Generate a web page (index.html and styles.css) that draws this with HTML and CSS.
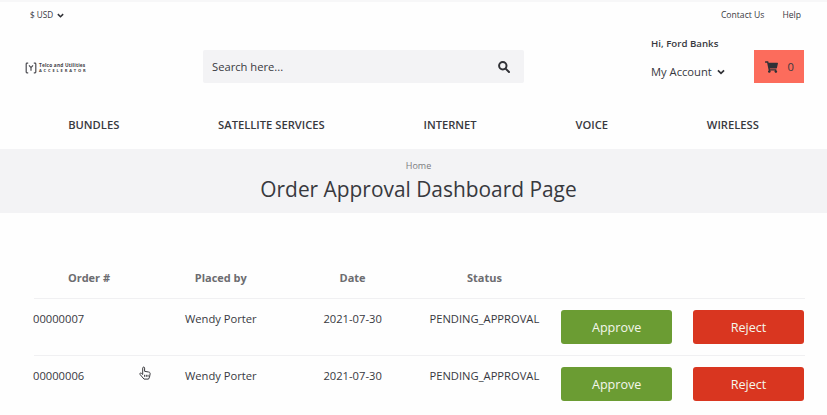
FILE: index.html
```html
<!DOCTYPE html>
<html lang="en">
<head>
<meta charset="utf-8">
<title>Order Approval Dashboard Page</title>
<link rel="stylesheet" href="styles.css">
</head>
<body>
<header>
  <div class="topbar">
    <div class="currency"><span>$ USD</span><svg class="chev" viewBox="0 0 10 7"><path d="M1.2 1.5 5 5.2 8.8 1.5"/></svg></div>
    <nav class="links"><a>Contact Us</a><a>Help</a></nav>
  </div>
  <div class="main">
    <div class="logo">
      <svg viewBox="0 0 12 12"><path d="M3.2 1.2H2Q1.2 1.2 1.2 2v8q0 .8.8.8h1.2M8.8 1.2H10q.8 0 .8.8v8q0 .8-.8.8H8.8M4 3.4 6 5.6l2-2.2M6 5.6V8.8"/></svg>
      <div class="words"><span class="name">Telco and Utilities</span><span class="sub">ACCELERATOR</span></div>
    </div>
    <div class="search"><span>Search here...</span>
      <svg viewBox="0 0 12 12"><circle cx="4.8" cy="4.8" r="3.7"/><path d="m7.6 7.6 3.4 3.4"/></svg>
    </div>
    <div class="account">
      <div class="hello">Hi, Ford Banks</div>
      <div class="mine"><span>My Account</span><svg class="chev" viewBox="0 0 10 7"><path d="M1.2 1.5 5 5.2 8.8 1.5"/></svg></div>
    </div>
    <div class="cart">
      <svg viewBox="0 0 576 512"><path d="M528 301 575 93c4-15-8-29-23-29H159l-9-45c-2-11-12-19-24-19H24C11 0 0 11 0 24v16c0 13 11 24 24 24h70l70 343a56 56 0 1 0 67 9h210a56 56 0 1 0 64-10l5-25c4-15-8-29-23-29H218l-6-32h293c11 0 21-8 23-19z"/></svg>
      <span>0</span>
    </div>
  </div>
  <nav class="menu"><a>BUNDLES</a><a>SATELLITE SERVICES</a><a>INTERNET</a><a>VOICE</a><a>WIRELESS</a></nav>
</header>
<section class="banner">
  <div class="crumb">Home</div>
  <h1>Order Approval Dashboard Page</h1>
</section>
<main class="orders">
  <div class="row head"><span>Order #</span><span>Placed by</span><span>Date</span><span>Status</span></div>
  <div class="row"><span class="num">00000007</span><span>Wendy Porter</span><span>2021-07-30</span><span class="status">PENDING_APPROVAL</span><button class="approve">Approve</button><button class="reject">Reject</button></div>
  <div class="row"><span class="num">00000006</span><span>Wendy Porter</span><span>2021-07-30</span><span class="status">PENDING_APPROVAL</span><button class="approve">Approve</button><button class="reject">Reject</button></div>
</main>
<svg class="pointer" viewBox="0 0 12 14"><path d="M3.7 8.5V2.1c0-1.4 1.9-1.4 1.9 0v3.2l4 .7c1.2.2 1.7.9 1.5 2l-.6 3.1-1 2H5L1.1 8.5c-.8-1.1.5-2 1.3-1.2z"/><path d="M5.6 8.8v2M7.3 8.8v2M9 8.8v2"/></svg>
</body>
</html>
```
FILE: styles.css
```css
* { box-sizing: border-box; }
body {
  margin: 0;
  width: 827px;
  height: 415px;
  overflow: hidden;
  background: #fefefe;
  color: #38393e;
  font: 11.2px/16px "Open Sans", sans-serif;
}
header { height: 149px; border-top: 2px solid #f7f7f8; }
.topbar {
  display: flex;
  justify-content: space-between;
  height: 26px;
  padding: 5px 26px 0 30px;
  font-size: 8.6px;
}
.currency { display: flex; align-items: center; height: 16px; gap: 4px; font-size: 8.2px; }
.links { display: flex; gap: 18px; }
.chev { flex: none; width: 7px; height: 5px; fill: none; stroke: #303136; stroke-width: 2.2; }
.main {
  display: grid;
  grid-template-columns: 178px 321px 127px 103px 50px;
  height: 74px;
  padding: 7px 0 0 25px;
}
.logo { display: flex; align-items: center; gap: 2px; height: 65px; }
.logo svg { width: 12px; height: 12px; fill: none; stroke: #4c4c52; stroke-width: 1.2; }
.words { display: flex; flex-direction: column; width: 49px; white-space: nowrap; color: #404045; }
.name { font-size: 4.8px; font-weight: 700; line-height: 5px; letter-spacing: 0.18px; }
.sub { font-size: 4px; font-weight: 700; line-height: 5px; letter-spacing: 1.85px; }
.search {
  display: flex;
  align-items: center;
  justify-content: space-between;
  height: 33px;
  margin-top: 15px;
  padding: 0 14px 0 9px;
  background: #f3f3f5;
  border-radius: 2px;
}
.search svg { width: 12px; height: 12px; fill: none; stroke: #303136; stroke-width: 2; stroke-linecap: round; }
.account { grid-column: 3 / 5; padding-left: 127px; white-space: nowrap; }
.hello { padding-top: 1px; font-size: 9.7px; font-weight: 600; }
.mine { display: flex; align-items: center; gap: 5px; margin-top: 12px; }
.mine .chev { width: 8px; height: 6px; }
.cart {
  display: flex;
  align-items: center;
  justify-content: space-between;
  grid-column: 5;
  height: 33px;
  margin-top: 15px;
  padding: 0 10px 0 11px;
  background: #fc6c5c;
}
.cart svg { width: 13px; height: 12px; fill: #303136; }
.menu { display: flex; justify-content: center; gap: 98.8px; padding-top: 15px; font-weight: 600; white-space: nowrap; }
.banner { height: 64px; padding-top: 9px; background: #f3f3f5; text-align: center; }
.crumb { padding-left: 10px; font-size: 9px; color: #7b7b80; }
h1 { margin: 0; padding-left: 10px; font-size: 20.9px; line-height: 30px; font-weight: 400; }
.orders { padding: 43px 22px 0 34px; }
.row {
  display: grid;
  grid-template-columns: repeat(6, 111px);
  column-gap: 20.8px;
  height: 57px;
  padding-top: 12px;
  border-top: 1px solid #f0f0f2;
  text-align: center;
  white-space: nowrap;
}
.row span { margin-left: -1px; }
.head { height: 42px; padding-top: 14px; border: 0; color: #6c6c70; font-size: 11px; font-weight: 700; }
.num { text-align: left; }
button {
  height: 34px;
  margin: -1px 0 0;
  padding: 0;
  border: 0;
  border-radius: 3px;
  color: #f4f7ec;
  font: 12.6px "Open Sans", sans-serif;
}
.approve { background: #6b9c33; }
.reject { background: #d93620; }
.pointer { position: absolute; left: 139px; top: 366px; width: 12px; height: 14px; fill: #fff; stroke: #3a3a3e; stroke-width: 1; }
```
